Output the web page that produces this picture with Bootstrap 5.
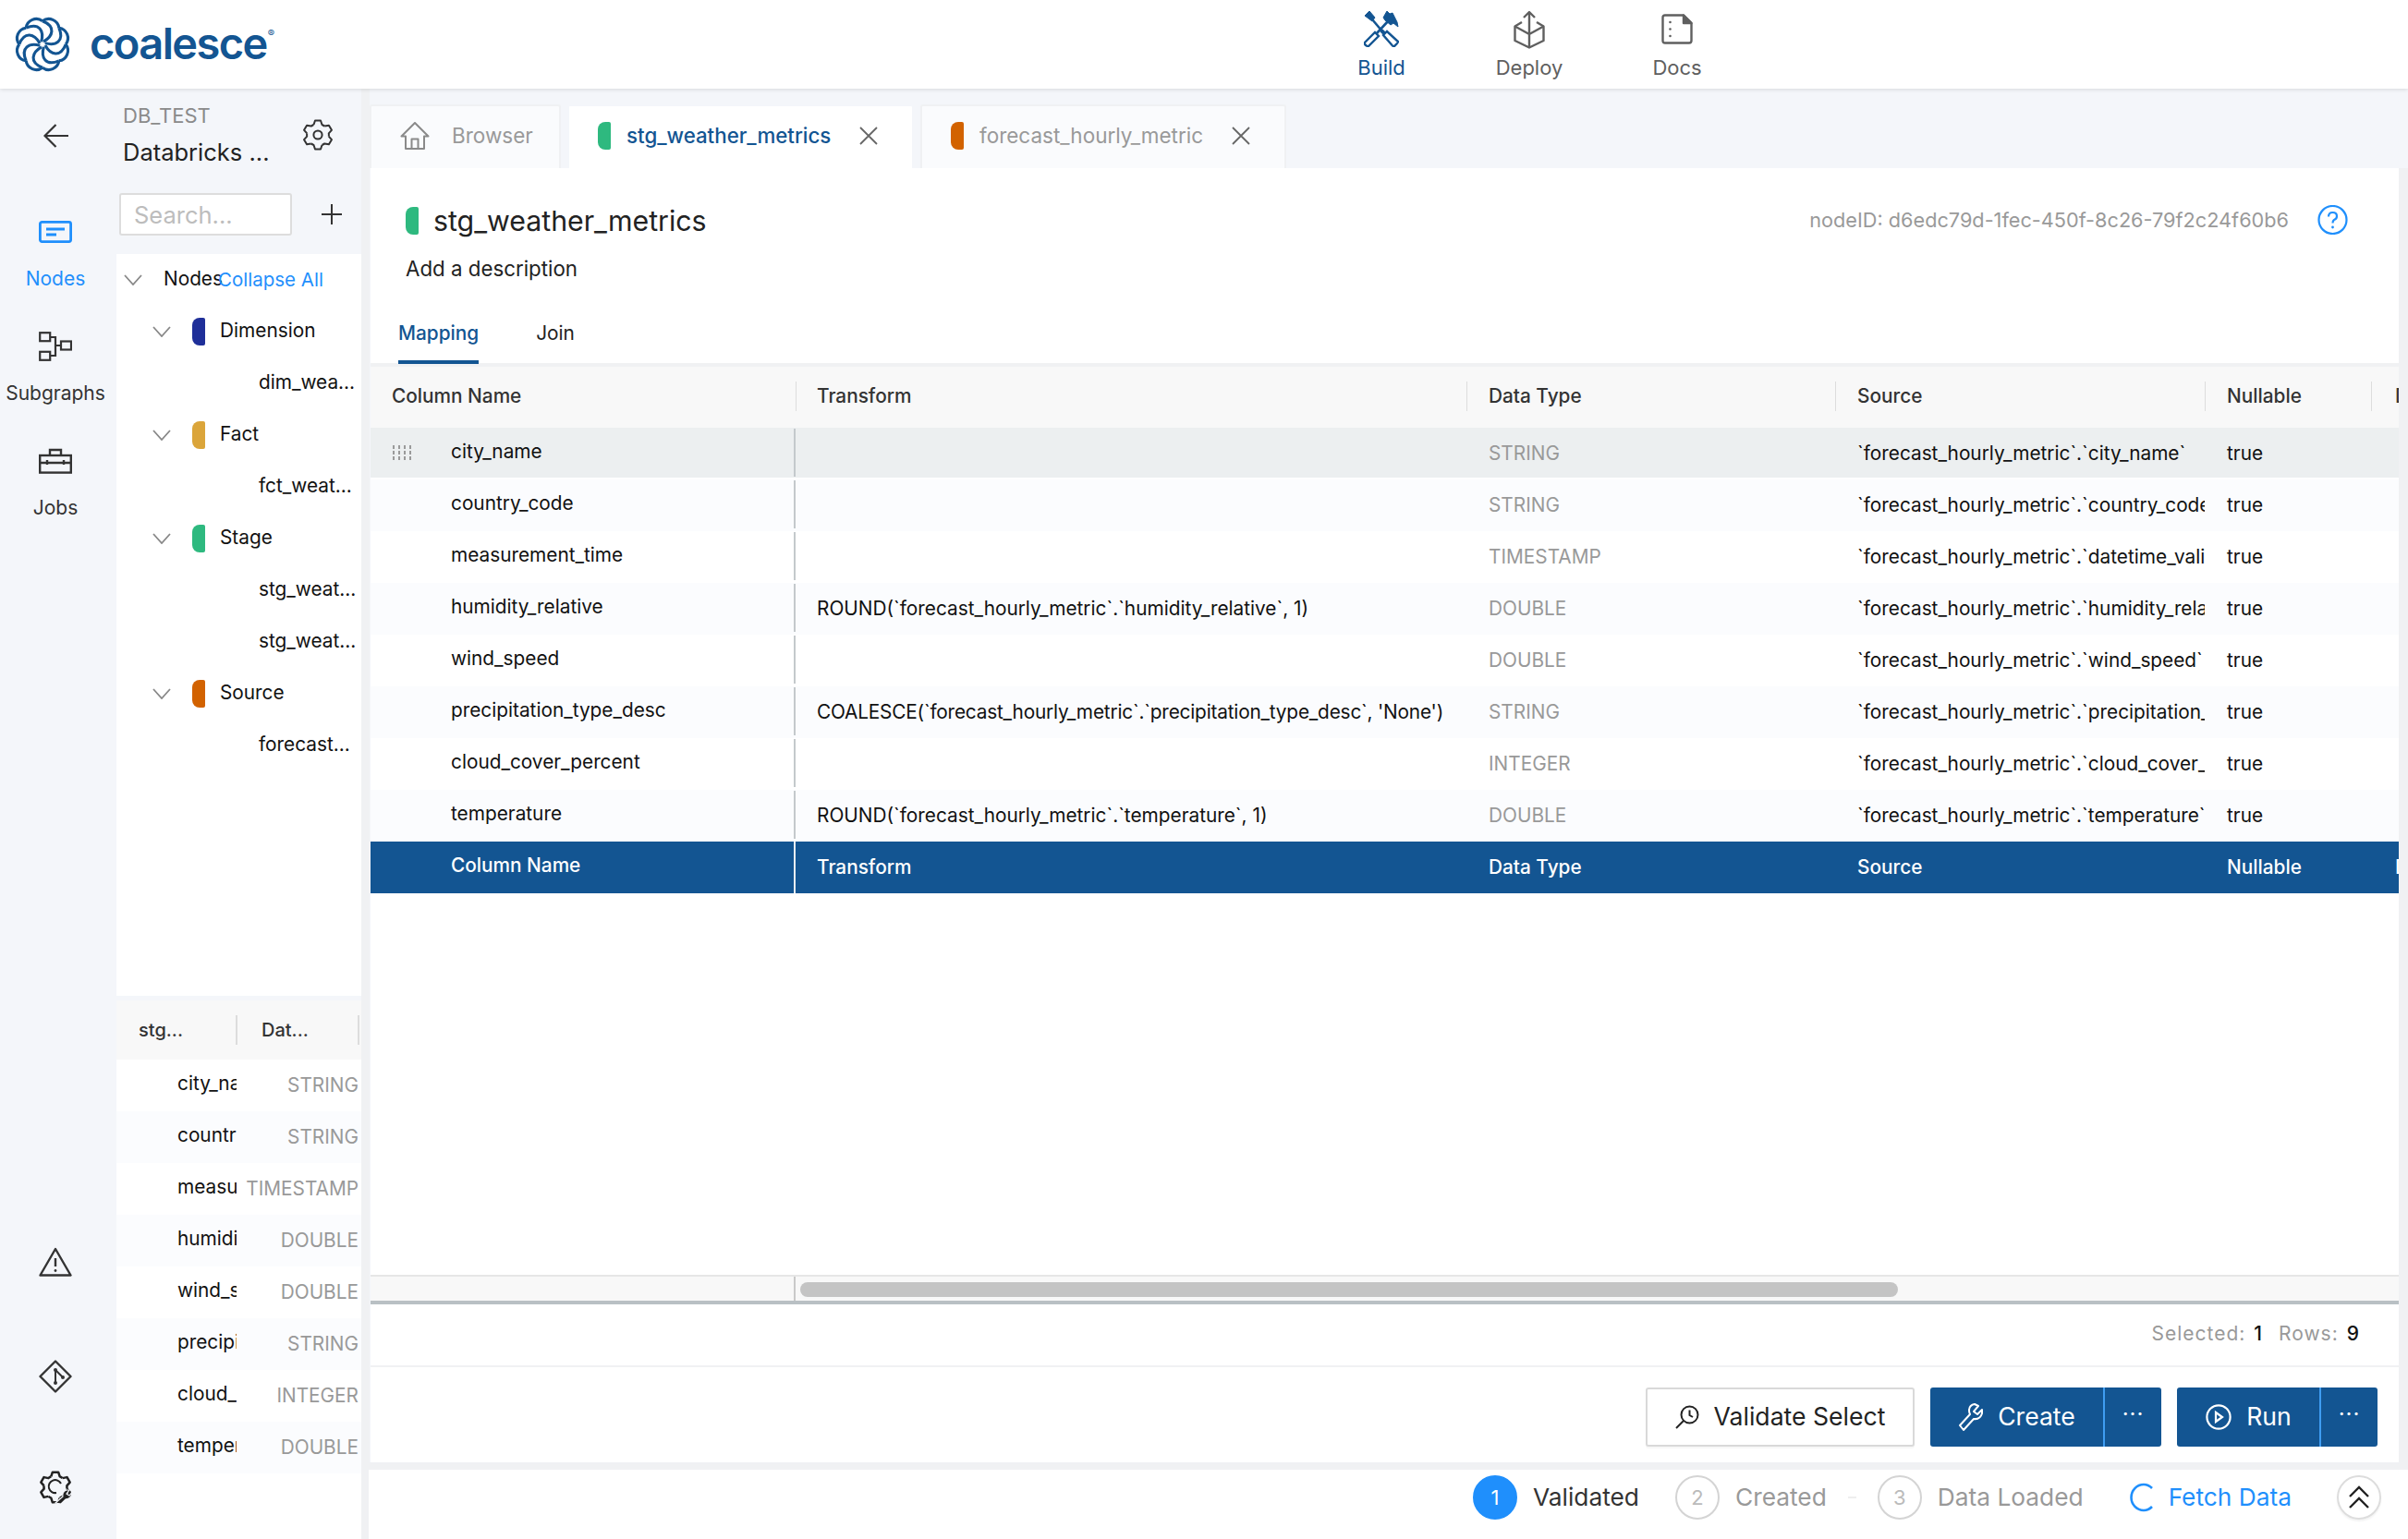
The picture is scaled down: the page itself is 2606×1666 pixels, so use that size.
<!DOCTYPE html>
<html lang="en"><head><meta charset="utf-8"><title>Coalesce</title>
<link href="https://cdn.jsdelivr.net/npm/bootstrap@5.3.0/dist/css/bootstrap.min.css" rel="stylesheet">
<style>
html,body{height:100%;overflow:hidden}
body{font-family:Inter,"Liberation Sans",sans-serif;font-size:20.8px;background:#f4f6fa;color:#222;display:flex;flex-direction:column}
svg{display:block;flex:none}
.top{height:96px;background:#fff;box-shadow:0 1px 4px rgba(0,0,0,.12);position:relative;z-index:2;padding:0;flex:none}
.logo{width:360px;padding:0 0 0 15px;margin:0;gap:20px;color:#135592;font-size:47px;font-weight:600;letter-spacing:-1.6px;line-height:1}
.logo:hover{color:#135592}
.logo span{position:relative;top:-2px}
.logo sup{font-size:11px;font-weight:400;top:-24px;letter-spacing:0;margin-left:1px}
.topnav{position:absolute;left:1415px;top:0;height:96px;display:flex}
.topnav a{width:160px;height:96px;display:flex;flex-direction:column;align-items:center;color:#5f5f5f;text-decoration:none;font-size:22px;line-height:26px}
.topnav a.on{color:#135592}
.topnav .ic{height:60px;display:flex;align-items:flex-end;padding-bottom:9px}
.topnav .ic.dep{padding-bottom:7px}
.topnav .ic.doc{padding-bottom:12px}
.work{flex:1;min-height:0;display:flex}
.rail{width:125px;flex:none;display:flex;flex-direction:column;align-items:center;font-size:21px;color:#333;padding-right:5px}
.rail .back{height:102px;display:flex;align-items:center;margin-bottom:31px}
.rail a{display:flex;flex-direction:column;align-items:center;color:inherit;text-decoration:none;height:124px;justify-content:flex-start}
.rail a.on{color:#1f8ffc}
.rail a span{position:relative;white-space:nowrap}
.rail .ri{height:44px;display:flex;align-items:center;margin-bottom:13px}
.rail .lower{margin-top:auto;display:flex;flex-direction:column;gap:84px;padding-bottom:38px;align-items:center}
.rail .lower .warn{margin-bottom:6px}
.panel{width:275px;flex:none;display:flex;flex-direction:column;border-right:9px solid #f0f1f3}
.phead{height:179px;flex:none;padding-left:8px}
.phead .top-r{display:flex;align-items:center}
.phead .names{width:195px}
.phead .db{color:#8a8a8a;font-size:22px;line-height:28px;padding-top:15px}
.phead .dn{font-size:25.5px;line-height:36px;color:#222;margin-top:8px}
.phead .gear{margin-top:12px}
.searchrow{margin-top:26px;display:flex;align-items:center}
.searchrow .form-control{width:187px;height:46px;border:2px solid #ddd;border-radius:3px;background:#fff;font-size:25.5px;padding:0 14px;margin-left:-4px;color:#222;box-shadow:none}
.searchrow .form-control::placeholder{color:#bdbdbd}
.searchrow svg{margin-left:32px}
.tree{height:803px;flex:none;background:#fff;margin-left:1px;font-size:20.8px;color:#111}
.tree .r{height:56px;display:flex;align-items:center;white-space:nowrap;position:relative;margin:0}
.tree .r>span,.tree .l3 span{position:relative;top:-1px}
.tree .l1{padding-left:8px}
.tree .l2{padding-left:39px}
.tree .l3{padding-left:154px}
.tree .chev{width:20px;margin-right:23px}
.mark{width:14px;height:30px;border-radius:8px 2px 2px 8px;flex:none;display:block}
.mk-dim{background:#1f2f99}.mk-fact{background:#dba53a}.mk-stage{background:#2eb97f}.mk-src{background:#d26200}
.tree .mark{margin-right:16px}
.collapse-all{color:#1f8ffc;margin-left:-5px;font-size:20.5px;position:relative}
.subt{margin-top:5px;margin-left:1px;background:#fff;flex:1;font-size:20.8px}
.subt .hd{height:64px;background:#f8f8f8;display:flex;align-items:center;color:#333;font-weight:500;font-size:20px}
.subt .hd span{display:flex;align-items:center;height:32px;overflow:hidden}
.subt .hd .a{width:131px;padding-left:24px;border-right:2px solid #ddd;box-sizing:border-box}
.subt .hd .b{width:132px;padding-left:26px;border-right:2px solid #ddd;box-sizing:border-box}
.subt .rw{height:56px;display:flex;align-items:center}
.subt .rw:nth-child(even){background:#fbfcfe}
.subt .n{width:130px;padding-left:66px;overflow:hidden;white-space:nowrap;box-sizing:border-box;color:#111;position:relative;top:-2px}
.subt .t{width:133px;text-align:right;color:#999;padding-right:1px;box-sizing:border-box;white-space:nowrap}
.main{flex:1;min-width:0;display:flex;flex-direction:column;padding-left:1px}
.tabs{height:86px;flex:none;padding-top:17px;gap:7px;border:0;flex-wrap:nowrap;font-size:22.5px;margin-left:-1px}
.tabs .nav-link{height:69px;display:flex;align-items:center;background:#fafbfd;border:2px solid #f0f1f3;border-bottom:0;border-radius:3px 3px 0 0;color:#999;margin:0;padding:0 0 4px 31px;white-space:nowrap}
.tabs .nav-link.active{background:#fff;color:#135592;border-color:#f4f6fa;font-weight:500;font-size:22.3px}
.tabs .t1{width:207px}.tabs .t2{width:375px}.tabs .t3{width:396px}
.tabs .mark{margin-right:17px}
.tabs .x{margin-left:31px}
.sheet{flex:1;min-height:0;background:#fff;border-right:10px solid #f0f1f3;display:flex;flex-direction:column}
.ttl{height:211px;flex:none;position:relative;padding-left:38px}
.ttl .h{display:flex;align-items:center;padding-top:42px;font-size:30.3px;color:#222;line-height:30px;box-sizing:content-box;height:30px}
.ttl .h .mark{margin-right:16px}
.ttl .desc{font-size:22.3px;margin-top:22px;line-height:30px;color:#222}
.ttl .nid{position:absolute;right:55px;top:40px;display:flex;align-items:center;gap:31px;color:#999;font-size:21.7px;line-height:30px}
.ttl .nav{position:absolute;left:30px;bottom:0;gap:62px;font-size:20.8px;border:0}
.ttl .nav .nav-link{border:0;padding:11px 0 0;height:60px;color:#222;background:none;border-radius:0}
.ttl .nav .nav-link.active{color:#135592;border-bottom:4px solid #135592;font-weight:500}
.rule4{height:4px;background:#f0f1f3;flex:none}
.tw{flex:1;min-height:0;overflow:hidden}
.map{width:2565px;table-layout:fixed;margin:0;--bs-table-bg:transparent;font-size:20.8px;color:#111}
.map th,.map td{padding:0 0 0 24px;height:56px;white-space:nowrap;overflow:hidden;vertical-align:middle;border:0;position:relative}
.map thead th{height:66px;background:#f8f8f8;font-weight:500;color:#333;padding-bottom:2px}
.map thead th:first-child{padding-left:23px}
.map thead th:nth-child(2),.map td.tf{padding-left:23px}
.map thead th:nth-child(6),.map td.ds{padding-left:26px}
.map td.tf.tight{letter-spacing:-.19px}
.map thead th+th::before{content:"";position:absolute;left:-1px;top:16px;height:32px;width:2px;background:#ddd}
.map td.nm{padding-left:87px}
.map td.nm::after{content:"";position:absolute;right:0;top:1px;bottom:3px;width:2px;background:#c4c9cc}
.map td.dt{color:#999}
.map tbody tr:nth-child(even) td{background:#fbfcfe}
.map tbody tr.sel td{background:#eceff0;box-shadow:inset 0 -2px 0 #fff}
.map tbody tr.blue td{background:#135592;color:#fff;font-weight:500}
.map tbody tr.blue td.nm::after{background:#e8edf2;top:0;bottom:0}
.map td.nm span{position:relative;top:-2px;display:block}
.grip{position:absolute;left:24px;top:19px}
.hs{height:32px;flex:none;display:flex;background:#f8f8f8;border-top:2px solid #e6e6e6;border-bottom:4px solid #b9c0c4}
.hs .fz{width:460px;border-right:2px solid #c9c9c9;flex:none}
.hs .trk{flex:1;padding:6px 0 0 5px}
.hs .th{width:1188px;height:16px;background:#c4c4c4;border-radius:8px}
.stat{height:68px;flex:none;display:flex;align-items:center;justify-content:flex-end;padding:0 42px 2px 0;color:#999;font-size:21px;letter-spacing:1px;gap:17px;border-bottom:2px solid #f0f1f3}
.stat b{font-weight:500;color:#111;margin-left:9px}
.acts{flex:none;height:103px;display:flex;align-items:flex-start;justify-content:flex-end;padding:22px 23px 0 0;gap:17px;font-size:26.6px}
.acts .btn{height:64px;display:flex;align-items:center;border-radius:3px;--bs-btn-font-size:26.6px}
.btn-v{width:291px;border:2px solid #d9d9d9;background:#fff;color:#222;justify-content:center;gap:16px;padding:0;box-shadow:0 2px 0 rgba(0,0,0,.03)}
.btn-b{background:#135592;border:0;color:#fff;padding:0;justify-content:center;gap:16px}
.btn-b.dots{border-left:2px solid #3f9df2;gap:0}
.cg .m{width:188px}.cg .dots{width:63px}
.rg .m{width:155px}.rg .dots{width:63px}
.dot3{letter-spacing:1px;font-size:24px;line-height:1;position:relative;top:-3px}
.bot{flex:none;background:#fff;border-top:8px solid #f0f1f3;margin-left:-2px;display:flex;align-items:center;justify-content:flex-end;font-size:26.3px;padding:0 29px 15px 0;color:#999;box-sizing:border-box;height:83px;white-space:nowrap}
.circ{width:48px;height:48px;border-radius:50%;border:2px solid #d4d4d4;display:flex;align-items:center;justify-content:center;font-size:22px;color:#bbb;flex:none;margin-right:17px}
.circ.on{background:#1f8ffc;border-color:#1f8ffc;color:#fff}
.bot .on-t{color:#333;margin-right:39px}
.bot .dash{width:9px;height:2px;background:#eee;margin:0 23px}
.fetch{color:#1f8ffc;margin:0 49px 0 50px;gap:16px}
.up{width:48px;height:48px;border-radius:50%;border:2px solid #ddd;display:flex;align-items:center;justify-content:center;box-shadow:0 2px 2px rgba(0,0,0,.05)}
</style></head>
<body>
<svg width="0" height="0" class="position-absolute"><defs>
<path id="t6" d="M-4.5 -11 L-3 -15.5 H3 L4.5 -11 Q6 -10.4 7.28 -9.4"/>
<g id="cog" fill="none" stroke-linejoin="round"><use href="#t6"/><use href="#t6" transform="rotate(60)"/><use href="#t6" transform="rotate(120)"/><use href="#t6" transform="rotate(180)"/><use href="#t6" transform="rotate(240)"/><use href="#t6" transform="rotate(300)"/></g>
<path id="chev" d="M1 1 L10 11 L19 1" fill="none" stroke="#888" stroke-width="1.8"/>
<g id="arm" fill="none" stroke="#135592" stroke-width="3.2"><path d="M1 -3 C12 -9 15 -20 0 -26"/><path d="M0 -26 A11.500 11.500 0 0 1 18.4 -18.4"/></g>
</defs></svg>

<nav class="navbar top d-flex align-items-center justify-content-start">
 <a class="navbar-brand d-flex align-items-center logo" href="#">
  <svg width="62" height="62" viewBox="-32 -32 64 64"><g><use href="#arm"/><use href="#arm" transform="rotate(45)"/><use href="#arm" transform="rotate(90)"/><use href="#arm" transform="rotate(135)"/><use href="#arm" transform="rotate(180)"/><use href="#arm" transform="rotate(225)"/><use href="#arm" transform="rotate(270)"/><use href="#arm" transform="rotate(315)"/></g></svg>
  <span>coalesce<sup>®</sup></span>
 </a>
 <div class="topnav">
  <a href="#" class="on"><span class="ic"><svg width="38" height="40" viewBox="0 0 38 40" fill="none" stroke="#135592"><path d="M1 6 L6 1 L12 8 L9 12 Z" fill="#135592" stroke-width="1"/><path d="M9 10 L20 23" stroke-width="2.6"/><path d="M19 22 L22 25" stroke-width="4"/><path d="M21 27 L25 23 L37 34 Q37.5 35 33 39 Q32 39.5 31 38.500 Z" stroke-width="2.4"/><path d="M1 35 L12 24 L16 28 L5 39 Q4 39.5 2 38 Q0 36 1 35 Z" stroke-width="2.4"/><path d="M14 25 L27 11" stroke-width="2.6"/><path d="M21 8 L25 1 L28 4 L31 3 L36 13 L37 18 L32 14 L29 16 L23 11 Z" fill="#135592" stroke-width="1"/></svg></span>Build</a>
  <a href="#"><span class="ic dep"><svg width="34" height="42" viewBox="0 0 34 42" fill="none" stroke="#5f5f5f" stroke-width="2.4" stroke-linejoin="round"><path d="M17 25 V2 M11 8 L17 2 L23 8"/><path d="M9 13 L1.5 17.5 V33 L17 40.5 L32.5 33 V17.5 L25 13"/><path d="M1.5 17.5 L17 26 L32.5 17.5 M17 26 V40.5"/></svg></span>Deploy</a>
  <a href="#"><span class="ic doc"><svg width="34" height="33" viewBox="0 0 34 33" fill="none" stroke="#5f5f5f" stroke-width="2.4" stroke-linejoin="round"><path d="M4 1.5 H24 L32.5 10 V29 Q32.5 31.5 30 31.5 H4 Q1.5 31.5 1.5 29 V4 Q1.5 1.5 4 1.5 Z"/><path d="M24 1.5 V10 H32.5 Z" fill="#5f5f5f"/><circle cx="9.5" cy="9" r="1.3" fill="#5f5f5f" stroke="none"/><circle cx="9.5" cy="16.5" r="1.3" fill="#5f5f5f" stroke="none"/><circle cx="9.5" cy="24" r="1.3" fill="#5f5f5f" stroke="none"/></svg></span>Docs</a>
 </div>
</nav>

<div class="work">
 <aside class="rail">
  <div class="back"><svg width="27" height="26" viewBox="0 0 27 26" fill="none" stroke="#333" stroke-width="2.2"><path d="M13.5 1 L1.5 13 L13.5 25 M1.5 13 H27"/></svg></div>
  <a href="#" class="on"><div class="ri"><svg width="36" height="24" viewBox="0 0 36 24" fill="none" stroke="#1f8ffc" stroke-width="2.8"><rect x="1.4" y="1.4" width="33.2" height="21.2" rx="2"/><path d="M8 9 H28 M8 15 H19"/></svg></div><span>Nodes</span></a>
  <a href="#"><div class="ri"><svg width="36" height="32" viewBox="0 0 36 32" fill="none" stroke="#333" stroke-width="2.2"><rect x="1.2" y="1.2" width="11" height="9"/><rect x="1.2" y="21.8" width="11" height="9"/><rect x="24" y="10.5" width="11" height="9"/><path d="M12 6 H18 V26 H12 M18 15 H24"/></svg></div><span>Subgraphs</span></a>
  <a href="#"><div class="ri"><svg width="36" height="28" viewBox="0 0 36 28" fill="none" stroke="#333" stroke-width="2.4"><path d="M12 8 V2 H24 V8"/><rect x="1.2" y="8" width="33.6" height="18.6"/><path d="M1 16 H35 M9 13 V18 M27 13 V18"/></svg></div><span>Jobs</span></a>
  <div class="lower">
   <svg class="warn" width="36" height="32" viewBox="0 0 36 32" fill="none" stroke="#333" stroke-width="2.4" stroke-linejoin="round"><path d="M18 2 L34.5 30.5 H1.5 Z"/><path d="M18 12 V21" /><circle cx="18" cy="25.5" r="1.4" fill="#333" stroke="none"/></svg>
   <svg width="36" height="36" viewBox="0 0 36 36" fill="none" stroke="#333" stroke-width="2.4" stroke-linejoin="round"><path d="M18 1.5 L34.5 18 L18 34.5 L1.5 18 Z"/><path d="M18 11 V25 M18 11 L26 19" stroke-width="2"/><circle cx="18" cy="11" r="2" fill="#333" stroke="none"/><circle cx="18" cy="25" r="2" fill="#333" stroke="none"/><circle cx="26" cy="19" r="2" fill="#333" stroke="none"/></svg>
   <svg width="36" height="36" viewBox="-18 -18 36 36"><g stroke="#222" stroke-width="2.4" transform="scale(1.05)"><use href="#cog"/></g><path d="M6 -4 A7 7 0 1 0 1 6" fill="none" stroke="#222" stroke-width="2"/><path d="M0 17 L8 10 Q7 5 12 3 L15 3 L12 7 L15 9 L18 6 Q18 12 11 13 L6 18 Z" fill="#222" stroke="#f4f6fa" stroke-width="1.2"/></svg>
  </div>
 </aside>

 <section class="panel">
  <div class="phead">
   <div class="top-r">
    <div class="names"><div class="db">DB_TEST</div><div class="dn">Databricks ...</div></div>
    <svg class="gear" width="32" height="34" viewBox="-16 -17 32 34" stroke="#333" stroke-width="2"><use href="#cog"/><circle r="4.6" fill="none"/></svg>
   </div>
   <div class="searchrow"><input class="form-control" placeholder="Search..."><svg width="22" height="22" viewBox="0 0 22 22" stroke="#333" stroke-width="2"><path d="M11 0 V22 M0 11 H22"/></svg></div>
  </div>
  <div class="tree">
   <div class="r l1"><svg class="chev" width="20" height="12"><use href="#chev"/></svg><span>Nodes</span><a class="collapse-all text-decoration-none" href="#">Collapse All</a></div>
   <div class="r l2"><svg class="chev" width="20" height="12"><use href="#chev"/></svg><i class="mark mk-dim"></i><span>Dimension</span></div>
   <div class="r l3"><span>dim_wea...</span></div>
   <div class="r l2"><svg class="chev" width="20" height="12"><use href="#chev"/></svg><i class="mark mk-fact"></i><span>Fact</span></div>
   <div class="r l3"><span>fct_weat...</span></div>
   <div class="r l2"><svg class="chev" width="20" height="12"><use href="#chev"/></svg><i class="mark mk-stage"></i><span>Stage</span></div>
   <div class="r l3"><span>stg_weat...</span></div>
   <div class="r l3"><span>stg_weat...</span></div>
   <div class="r l2"><svg class="chev" width="20" height="12"><use href="#chev"/></svg><i class="mark mk-src"></i><span>Source</span></div>
   <div class="r l3"><span>forecast...</span></div>
  </div>
  <div class="subt">
   <div class="hd"><span class="a">stg...</span><span class="b">Dat...</span></div>
   <div>
   <div class="rw"><span class="n">city_name</span><span class="t">STRING</span></div>
   <div class="rw"><span class="n">country_code</span><span class="t">STRING</span></div>
   <div class="rw"><span class="n">measurement_time</span><span class="t">TIMESTAMP</span></div>
   <div class="rw"><span class="n">humidity_relative</span><span class="t">DOUBLE</span></div>
   <div class="rw"><span class="n">wind_speed</span><span class="t">DOUBLE</span></div>
   <div class="rw"><span class="n">precipitation_type_desc</span><span class="t">STRING</span></div>
   <div class="rw"><span class="n">cloud_cover_percent</span><span class="t">INTEGER</span></div>
   <div class="rw"><span class="n">temperature</span><span class="t">DOUBLE</span></div>
   </div>
  </div>
 </section>

 <main class="main">
  <ul class="nav nav-tabs tabs">
   <li class="nav-item"><a class="nav-link t1" href="#"><svg class="me-4" width="32" height="30" viewBox="0 0 32 30" fill="none" stroke="#8a8a8a" stroke-width="2" stroke-linejoin="round"><path d="M16 1 L1.5 15.5 H6 V29 H26 V15.5 H30.5 Z"/><path d="M12.5 29 V18.5 H19.5 V29"/></svg>Browser</a></li>
   <li class="nav-item"><a class="nav-link t2 active" href="#"><i class="mark mk-stage"></i>stg_weather_metrics<svg class="x" width="20" height="20" viewBox="0 0 20 20" stroke="#666" stroke-width="1.8"><path d="M1 1 L19 19 M19 1 L1 19"/></svg></a></li>
   <li class="nav-item"><a class="nav-link t3" href="#"><i class="mark mk-src"></i>forecast_hourly_metric<svg class="x" width="20" height="20" viewBox="0 0 20 20" stroke="#666" stroke-width="1.8"><path d="M1 1 L19 19 M19 1 L1 19"/></svg></a></li>
  </ul>
  <div class="sheet">
   <div class="ttl">
    <div class="h"><i class="mark mk-stage"></i>stg_weather_metrics</div>
    <div class="desc">Add a description</div>
    <div class="nid"><span>nodeID: d6edc79d-1fec-450f-8c26-79f2c24f60b6</span><svg width="33" height="32" viewBox="0 0 33 32" fill="none" stroke="#1f8ffc" stroke-width="2.2"><circle cx="16.5" cy="16" r="15"/><path d="M12 12.5 Q12 8 16.5 8 Q21 8 21 12 Q21 15 18 16 Q16.5 17 16.5 19.5"/><circle cx="16.5" cy="24" r="1.4" fill="#1f8ffc" stroke="none"/></svg></div>
    <ul class="nav nav-tabs"><li class="nav-item"><a class="nav-link active" href="#">Mapping</a></li><li class="nav-item"><a class="nav-link" href="#">Join</a></li></ul>
   </div>
   <div class="rule4"></div>
   <div class="tw">
    <table class="table map">
     <colgroup><col style="width:460px"><col style="width:726px"><col style="width:399px"><col style="width:400px"><col style="width:180px"><col style="width:400px"></colgroup>
     <thead><tr><th>Column Name</th><th>Transform</th><th>Data Type</th><th>Source</th><th>Nullable</th><th>Description</th></tr></thead>
     <tbody>
      <tr class="sel"><td class="nm"><svg class="grip" width="21" height="16" viewBox="0 0 21 16" fill="#9a9a9a"><path d="M0 0h2v4H0zM6 0h2v4H6zM12 0h2v4h-2zM18 0h2v4h-2zM0 6h2v4H0zM6 6h2v4H6zM12 6h2v4h-2zM18 6h2v4h-2zM0 12h2v4H0zM6 12h2v4H6zM12 12h2v4h-2zM18 12h2v4h-2z"/></svg><span>city_name</span></td><td class="tf"></td><td class="dt">STRING</td><td>`forecast_hourly_metric`.`city_name`</td><td>true</td><td></td></tr>
      <tr><td class="nm"><span>country_code</span></td><td class="tf"></td><td class="dt">STRING</td><td>`forecast_hourly_metric`.`country_code`</td><td>true</td><td></td></tr>
      <tr><td class="nm"><span>measurement_time</span></td><td class="tf"></td><td class="dt">TIMESTAMP</td><td>`forecast_hourly_metric`.`datetime_valid_local`</td><td>true</td><td></td></tr>
      <tr><td class="nm"><span>humidity_relative</span></td><td class="tf">ROUND(`forecast_hourly_metric`.`humidity_relative`, 1)</td><td class="dt">DOUBLE</td><td>`forecast_hourly_metric`.`humidity_relative`</td><td>true</td><td></td></tr>
      <tr><td class="nm"><span>wind_speed</span></td><td class="tf"></td><td class="dt">DOUBLE</td><td>`forecast_hourly_metric`.`wind_speed`</td><td>true</td><td></td></tr>
      <tr><td class="nm"><span>precipitation_type_desc</span></td><td class="tf tight">COALESCE(`forecast_hourly_metric`.`precipitation_type_desc`, 'None')</td><td class="dt">STRING</td><td>`forecast_hourly_metric`.`precipitation_type_desc`</td><td>true</td><td></td></tr>
      <tr><td class="nm"><span>cloud_cover_percent</span></td><td class="tf"></td><td class="dt">INTEGER</td><td>`forecast_hourly_metric`.`cloud_cover_percent`</td><td>true</td><td></td></tr>
      <tr><td class="nm"><span>temperature</span></td><td class="tf">ROUND(`forecast_hourly_metric`.`temperature`, 1)</td><td class="dt">DOUBLE</td><td>`forecast_hourly_metric`.`temperature`</td><td>true</td><td></td></tr>
      <tr class="blue"><td class="nm"><span>Column Name</span></td><td class="tf">Transform</td><td>Data Type</td><td>Source</td><td>Nullable</td><td class="ds">Description</td></tr>
     </tbody>
    </table>
   </div>
   <div class="hs"><div class="fz"></div><div class="trk"><div class="th"></div></div></div>
   <div class="stat"><span>Selected:<b>1</b></span><span>Rows:<b>9</b></span></div>
   <div class="acts">
    <button class="btn btn-v" type="button"><svg width="26" height="26" viewBox="0 0 26 26" fill="none" stroke="#222" stroke-width="2"><circle cx="15.5" cy="10.5" r="9"/><path d="M9 17 L1 25"/><path d="M15.5 5.5 V11 L19 13"/></svg>Validate Select</button>
    <div class="btn-group cg"><button class="btn btn-b m" type="button"><svg width="26" height="30" viewBox="0 0 26 30" fill="none" stroke="#fff" stroke-width="2" stroke-linejoin="round"><path d="M17 1 Q11 2 11 8 Q11 10 12 12 L1 24 L5 29 L16 17 Q23 18 25 11 L25 7 L20 12 L16 9 L21 3 Z"/></svg>Create</button><button class="btn btn-b dots" type="button"><span class="dot3">···</span></button></div>
    <div class="btn-group rg"><button class="btn btn-b m" type="button"><svg width="28" height="28" viewBox="0 0 28 28" fill="none" stroke="#fff" stroke-width="2.2"><circle cx="14" cy="14" r="12.6"/><path d="M11 9 L18 14 L11 19 Z"/></svg>Run</button><button class="btn btn-b dots" type="button"><span class="dot3">···</span></button></div>
   </div>
  </div>
  <div class="bot">
   <span class="circ on">1</span><span class="on-t">Validated</span>
   <span class="circ">2</span><span>Created</span><span class="dash"></span>
   <span class="circ">3</span><span>Data Loaded</span>
   <a class="fetch d-flex align-items-center text-decoration-none" href="#"><svg width="26" height="32" viewBox="0 0 26 32" fill="none" stroke="#1f8ffc" stroke-width="2.6"><path d="M24 6 Q20 2 15 2 A13.500 14 0 0 0 15 30 Q20 30 24 26"/></svg>Fetch Data</a>
   <span class="up"><svg width="24" height="26" viewBox="0 0 24 26" fill="none" stroke="#222" stroke-width="2.4"><path d="M2 12 L12 2 L22 12 M2 24 L12 14 L22 24"/></svg></span>
  </div>
 </main>
</div>
<script src="https://cdn.jsdelivr.net/npm/bootstrap@5.3.0/dist/js/bootstrap.bundle.min.js"></script>
</body></html>
